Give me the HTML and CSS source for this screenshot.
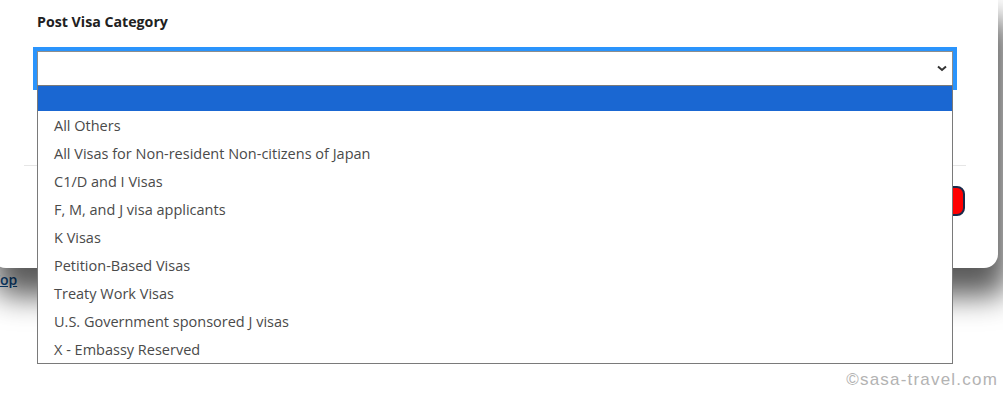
FILE: index.html
```html
<!DOCTYPE html>
<html lang="en">
<head>
    <meta charset="UTF-8">
    <meta name="viewport" content="width=device-width, initial-scale=1.0">
    <title>Post Visa Category</title>
    <link rel="stylesheet" href="styles.css">
</head>
<body>

    <!-- Page under the modal -->
    <div class="page">
        <a href="#" class="topLink">Top</a>
        <div class="copyright">&copy;sasa-travel.com</div>
    </div>

    <!-- Modal -->
    <div class="modal">
        <div class="modalBody">
            <label class="fieldLabel">Post Visa Category</label>

            <div class="selectWrap">
                <div class="select">
                    <svg class="chevron" width="10" height="7" viewBox="0 0 10 7">
                        <path d="M1 1.5 L5 5 L9 1.5" fill="none" stroke="#333" stroke-width="2"/>
                    </svg>
                </div>

                <!-- Open dropdown list -->
                <ul class="optionList">
                    <li class="option selected"></li>
                    <li class="option">All Others</li>
                    <li class="option">All Visas for Non-resident Non-citizens of Japan</li>
                    <li class="option">C1/D and I Visas</li>
                    <li class="option">F, M, and J visa applicants</li>
                    <li class="option">K Visas</li>
                    <li class="option">Petition-Based Visas</li>
                    <li class="option">Treaty Work Visas</li>
                    <li class="option">U.S. Government sponsored J visas</li>
                    <li class="option">X - Embassy Reserved</li>
                </ul>
            </div>
        </div>

        <div class="modalFooter">
            <button class="closeBtn">Close</button>
        </div>
    </div>

</body>
</html>
```

FILE: styles.css
```css
body {
    margin: 0;
    padding: 0;
    background: white;
    height: 393px;
    overflow: hidden;
    position: relative;
    font-family: 'Open Sans', 'Noto Sans', sans-serif;
}

/* Page underneath */
.page {
    height: 393px;
    box-sizing: border-box;
    padding: 270px 5px 3px 0;
    display: flex;
    flex-direction: column;
    justify-content: space-between;
}

.topLink {
    margin-left: -8px;
    font-size: 14px;
    font-weight: 600;
    color: #0d4f8f;
    text-decoration: underline;
    align-self: flex-start;
}

.copyright {
    align-self: flex-end;
    font-family: 'Liberation Sans', Arial, sans-serif;
    font-size: 17px;
    letter-spacing: 1.2px;
    color: #b3b3b3;
}

/* Modal */
.modal {
    position: absolute;
    left: -8px;
    top: 0;
    width: 1006px;
    height: 268px;
    background: white;
    border-radius: 0 0 14px 14px;
    box-shadow: 6px 24px 30px 4px rgba(0, 0, 0, 0.65);
}

.modalBody {
    padding: 12px 45px 79px;
}

.fieldLabel {
    display: block;
    font-size: 14.2px;
    line-height: 20px;
    font-weight: 700;
    color: #212121;
}

.selectWrap {
    position: relative;
    margin-top: 19px;
}

.select {
    height: 35px;
    box-sizing: border-box;
    border: 1px solid #8d8d8d;
    outline: 4px solid #2a94fc;
    display: flex;
    align-items: center;
    justify-content: flex-end;
    padding-right: 5px;
}

.chevron {
    display: block;
}

.optionList {
    position: absolute;
    top: 34px;
    left: 0;
    right: 0;
    margin: 0;
    padding: 0;
    list-style: none;
    background: white;
    border: 1px solid #7a7a7a;
    z-index: 5;
}

.option {
    height: 28px;
    line-height: 30px;
    padding-left: 16px;
    font-size: 14.5px;
    color: #4a4a4a;
}

.option.selected {
    height: 25px;
    background: #1a67d2;
}

.modalFooter {
    margin: 0 32px;
    border-top: 1px solid #e6e6e6;
    padding-top: 20px;
    display: flex;
    justify-content: flex-end;
}

.closeBtn {
    height: 30px;
    padding: 0 16px;
    background: #ff0000;
    color: white;
    border: 2px solid #1b2a4a;
    border-radius: 8px;
    font-size: 14px;
    margin-right: 1px;
}
```
